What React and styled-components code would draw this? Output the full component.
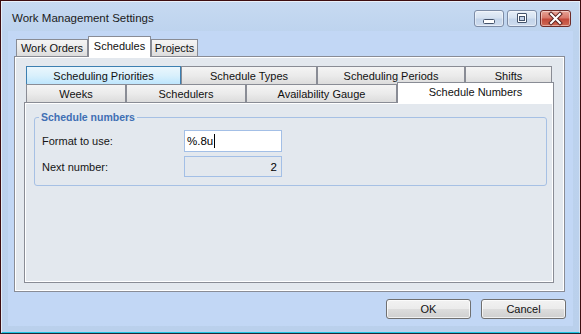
import React from 'react';
import styled, { createGlobalStyle, css } from 'styled-components';

const Global = createGlobalStyle`
  html, body { margin: 0; padding: 0; background: #bcd1ea; overflow: hidden; }
  #root { width: 581px; height: 334px; }
  * { box-sizing: border-box; }
`;

const Window = styled.div`
  width: 581px;
  height: 334px;
  display: flex;
  flex-direction: column;
  border: 1px solid #3d0d10;
  border-bottom-color: #1b2a38;
  background: linear-gradient(180deg, #c7daf1 0px, #bdd3ee 31px, #bad0ec 100%);
  box-shadow: inset 1px 1px 0 rgba(255,255,255,0.6), inset -1px 0 0 rgba(255,255,255,0.4), inset 0 -1px 0 #1cc4e2;
  font-family: "Liberation Sans", Arial, sans-serif;
  font-size: 11px;
  color: #000;
`;

const TitleBar = styled.div`
  flex: 0 0 30px;
  display: flex;
  align-items: flex-start;
`;

const TitleText = styled.div`
  margin: 10px 0 0 11px;
  font-size: 11.5px;
  line-height: 14px;
  color: #1b1b1b;
`;

const CaptionGroup = styled.div`
  margin: 9px 9px 0 auto;
  display: flex;
  gap: 3px;
`;

const CaptionButton = styled.div`
  width: ${p => p.$w || 30}px;
  height: 17px;
  border-radius: 3px;
  border: 1px solid ${p => (p.$close ? '#6e2b28' : '#7d8ca6')};
  background: ${p =>
    p.$close
      ? 'linear-gradient(180deg, #e7a497 0%, #d8786a 45%, #c24a3b 55%, #cf6a55 100%)'
      : 'linear-gradient(180deg, #e6eef8 0%, #d6e2f1 45%, #c3d4ea 55%, #cfdcee 100%)'};
  box-shadow: inset 0 0 0 1px rgba(255,255,255,0.45);
  display: flex;
  align-items: center;
  justify-content: center;
  svg { display: block; }
`;

const Client = styled.div`
  flex: 0 0 295px;
  margin: 0 7px;
  background: #c2d7f5;
  display: flex;
  flex-direction: column;
  padding-top: 5px;
`;

const TopStrip = styled.div`
  height: 21px;
  margin: 0 0 -1px 8px;
  display: flex;
  align-items: flex-end;
  position: relative;
  z-index: 1;
`;

const tabBase = css`
  border: 1px solid #898c95;
  border-bottom: none;
  display: flex;
  align-items: center;
  justify-content: center;
  white-space: nowrap;
  color: #111;
`;

const TopTab = styled.div`
  ${tabBase};
  width: ${p => p.$w}px;
  height: ${p => (p.$active ? 21 : 17)}px;
  margin-bottom: ${p => (p.$active ? 0 : 1)}px;
  padding-bottom: ${p => (p.$active ? 3 : 0)}px;
  background: ${p => (p.$active ? '#ffffff' : 'linear-gradient(180deg, #f4f4f4 0%, #ebebeb 50%, #dcdcdc 100%)')};
`;

const Panel = styled.div`
  margin-left: 6px;
  width: 551px;
  height: 236px;
  border: 1px solid #898c95;
  background: #e3e8ee;
  box-shadow: inset 1px 1px 0 #fff, inset -1px -1px 0 #fff;
  padding: 9px 10px 8px 9px;
  display: flex;
  flex-direction: column;
`;

const TabRow = styled.div`
  height: 18px;
  display: flex;
  padding-left: 2px;
  position: relative;
`;

const SubTab = styled.div`
  ${tabBase};
  width: ${p => p.$w}px;
  height: ${p => (p.$active ? 21 : 18)}px;
  margin-top: ${p => (p.$active ? -2 : 0)}px;
  padding-bottom: ${p => (p.$active ? 3 : 0)}px;
  position: relative;
  z-index: ${p => (p.$active ? 2 : 0)};
  ${p =>
    p.$active
      ? css`background: #ffffff;`
      : p.$hot
      ? css`
          background: linear-gradient(180deg, #eaf6fd 0%, #d9f0fc 50%, #bee6fd 100%);
          border-color: #3c7fb1;
        `
      : css`background: linear-gradient(180deg, #f4f4f4 0%, #ebebeb 50%, #dcdcdc 100%);`}
`;

const SubPanel = styled.div`
  width: 530px;
  height: 181px;
  border: 1px solid #898c95;
  background: #e3e8ee;
  box-shadow: inset 1px 1px 0 #fff, inset -1px -1px 0 #fff;
  padding: 8px 7px 0 9px;
`;

const Group = styled.fieldset`
  margin: 0;
  width: 513px;
  border: 1px solid #a6c0e4;
  border-radius: 3px;
  padding: 6px 6px 8px 7px;
`;

const GroupTitle = styled.legend`
  margin-left: -3px;
  padding: 0 2px;
  font-weight: bold;
  font-size: 10.5px;
  line-height: 13px;
  color: #3f6fb4;
`;

const FieldGrid = styled.div`
  display: grid;
  grid-template-columns: 142px 98px;
  row-gap: 4px;
  align-items: center;
`;

const Label = styled.div`
  color: #151515;
  line-height: 13px;
  padding-top: 1px;
`;

const Field = styled.div`
  height: ${p => (p.$readonly ? 21 : 22)}px;
  border: 1px solid #a3bfe6;
  background: ${p => (p.$readonly ? '#e3e8ee' : '#ffffff')};
  display: flex;
  align-items: center;
  justify-content: ${p => (p.$readonly ? 'flex-end' : 'flex-start')};
  padding: 0 4px 0 2px;
  color: #000;
  font-size: 11.5px;
`;

const Caret = styled.span`
  display: inline-block;
  width: 1px;
  height: 14px;
  background: #000;
  margin-left: 1px;
`;

const Footer = styled.div`
  margin-top: 7px;
  display: flex;
  justify-content: flex-end;
  gap: 10px;
  padding-right: 7px;
`;

const Button = styled.div`
  width: 85px;
  height: 20px;
  border: 1px solid #707070;
  border-radius: 3px;
  background: linear-gradient(180deg, #f2f2f2 0%, #ebebeb 50%, #dddddd 51%, #cfcfcf 100%);
  box-shadow: inset 0 0 0 1px rgba(255,255,255,0.7);
  display: flex;
  align-items: center;
  justify-content: center;
  color: #111;
`;

const Tab = ({ w, active, hot, children }) => (
  <SubTab $w={w} $active={active} $hot={hot}>{children}</SubTab>
);

export default function App() {
  return (
    <>
      <Global />
      <Window>
        <TitleBar>
          <TitleText>Work Management Settings</TitleText>
          <CaptionGroup>
            <CaptionButton>
              <svg width="28" height="15" viewBox="0 0 28 15">
                <rect x="8.5" y="8.5" width="11" height="4" rx="1" fill="#fff" stroke="#44536b" />
              </svg>
            </CaptionButton>
            <CaptionButton>
              <svg width="28" height="15" viewBox="0 0 28 15">
                <rect x="9.5" y="2.5" width="9" height="9" rx="0.5" fill="#fff" stroke="#44536b" />
                <rect x="11.5" y="5.5" width="5" height="4" fill="#c3d2e8" stroke="#44536b" />
              </svg>
            </CaptionButton>
            <CaptionButton $close $w={31}>
              <svg width="29" height="15" viewBox="0 0 29 15">
                <path d="M10 3 L19 12 M19 3 L10 12" stroke="#5a2320" strokeWidth="4" strokeLinecap="square" />
                <path d="M10 3 L19 12 M19 3 L10 12" stroke="#ffffff" strokeWidth="2" strokeLinecap="square" />
              </svg>
            </CaptionButton>
          </CaptionGroup>
        </TitleBar>
        <Client>
          <TopStrip>
            <TopTab $w={72}>Work Orders</TopTab>
            <TopTab $w={63} $active>Schedules</TopTab>
            <TopTab $w={47}>Projects</TopTab>
          </TopStrip>
          <Panel>
            <TabRow>
              <Tab w={155} hot>Scheduling Priorities</Tab>
              <Tab w={136}>Schedule Types</Tab>
              <Tab w={148}>Scheduling Periods</Tab>
              <Tab w={87}>Shifts</Tab>
            </TabRow>
            <TabRow>
              <Tab w={100}>Weeks</Tab>
              <Tab w={120}>Schedulers</Tab>
              <Tab w={151}>Availability Gauge</Tab>
              <Tab w={157} active>Schedule Numbers</Tab>
            </TabRow>
            <SubPanel>
              <Group>
                <GroupTitle>Schedule numbers</GroupTitle>
                <FieldGrid>
                  <Label>Format to use:</Label>
                  <Field>%.8u<Caret /></Field>
                  <Label>Next number:</Label>
                  <Field $readonly>2</Field>
                </FieldGrid>
              </Group>
            </SubPanel>
          </Panel>
          <Footer>
            <Button>OK</Button>
            <Button>Cancel</Button>
          </Footer>
        </Client>
      </Window>
    </>
  );
}
